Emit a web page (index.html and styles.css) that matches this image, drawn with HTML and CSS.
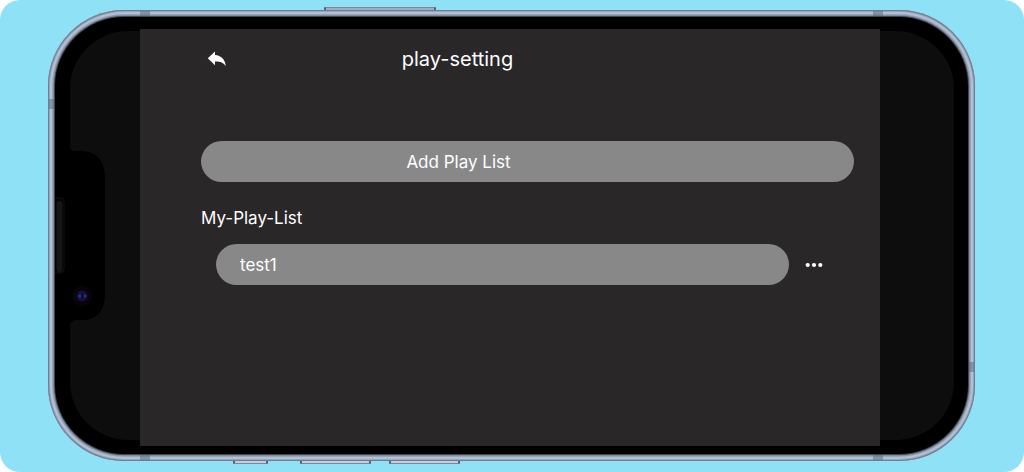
FILE: index.html
```html
<!DOCTYPE html>
<html lang="en">
<head>
<meta charset="utf-8">
<meta name="viewport" content="width=device-width, initial-scale=1">
<title>play-setting</title>
<link rel="stylesheet" href="styles.css">
</head>
<body>
<div class="stage">
  <div class="phone">
    <span class="key key-power"></span>
    <span class="key key-mute"></span>
    <span class="key key-up"></span>
    <span class="key key-down"></span>
    <div class="frame">
      <span class="band band-top-left"></span>
      <span class="band band-top-right"></span>
      <span class="band band-bottom-left"></span>
      <span class="band band-bottom-right"></span>
      <span class="band band-left"></span>
      <span class="band band-right"></span>
      <div class="bezel">
        <div class="side side-left"></div>
        <main class="app">
          <header class="header">
            <button class="icon-button back" type="button" aria-label="Back">
              <svg width="20" height="18" viewBox="0 0 20 18" aria-hidden="true"><path fill="#fff" d="M.8 8.300 8 1.500V5C14 5.400 18.200 9.500 18.900 16.300 16.300 12.500 13 11.300 8 11.500V15.300Z"/></svg>
            </button>
            <h1 class="title">play-setting</h1>
          </header>
          <button class="pill add" type="button">Add Play List</button>
          <h2 class="label">My-Play-List</h2>
          <ul class="lists">
            <li class="row">
              <button class="pill item" type="button">test1</button>
              <button class="icon-button more" type="button" aria-label="More options for test1">
                <svg width="18" height="6" viewBox="0 0 18 6" aria-hidden="true"><g fill="#fff"><circle cx="2.700" cy="3" r="2.100"/><circle cx="9" cy="3" r="2.100"/><circle cx="15.300" cy="3" r="2.100"/></g></svg>
              </button>
            </li>
          </ul>
        </main>
        <div class="side side-right"></div>
        <svg class="notch" width="52" height="188" viewBox="0 0 52 188" aria-hidden="true">
          <path fill="#000" d="M0 0H15V4Q15 9 20 9H27C42 10 50 19 50 36V152C50 169 42 178 27 178H20Q15 179 15 184V188H0Z"/>
          <rect x="-4" y="56" width="13" height="75" rx="4" fill="#020202" stroke="#121212"/>
          <rect x="2" y="59" width="5" height="71" rx="2.500" fill="#151515" stroke="#1f1f1f" stroke-width=".6"/>
          <circle cx="27" cy="154" r="10" fill="#08040a"/>
          <circle cx="27" cy="154" r="5" fill="#10133c" stroke="#171333"/>
          <circle cx="25" cy="154" r="1.500" fill="#2b36a0"/>
          <circle cx="30" cy="154" r="1.500" fill="#292f91"/>
          <circle cx="27" cy="154" r="1" fill="#03030c"/>
        </svg>
      </div>
    </div>
  </div>
</div>
</body>
</html>
```
FILE: styles.css
```css
* {
  box-sizing: border-box;
}

body {
  margin: 0;
  background: #fff;
  color: #fff;
  font-family: Inter, "Liberation Sans", sans-serif;
}

.stage {
  display: flex;
  min-height: 100vh;
  padding: 10px 49px 11px 48px;
  border-radius: 20px;
  background: #8fe2f6;
}

.phone {
  position: relative;
  display: flex;
  flex: 1;
}

/* metal rim */
.frame {
  position: relative;
  display: flex;
  flex: 1;
  padding: 7px;
  border-radius: 76px;
  background: #8592a6;
  box-shadow:
    inset 0 0 0 1px #6f7f93,
    inset 0 0 0 2px #97a4b8,
    inset 0 0 0 4px #b3c0d4,
    inset 0 0 0 5px #98a5b9,
    inset 0 0 0 6px #7f8da2;
}

.bezel {
  position: relative;
  display: flex;
  flex: 1;
  padding: 12px 14px 8px 15px;
  border-radius: 69px;
  background: #000;
  box-shadow: 0 0 0 1px #41474f;
}

.side {
  margin: 2px 0 6px;
  background: #0d0d0d;
}

.side-left {
  width: 70px;
  border-radius: 58px 0 0 58px;
}

.side-right {
  width: 74px;
  border-radius: 0 58px 58px 0;
}

.notch {
  position: absolute;
  left: 0;
  top: 50%;
  margin-top: -94px;
}

.band {
  position: absolute;
  width: 10px;
  height: 6px;
  background: rgb(83 101 123 / 50%);
}

.band-top-left {
  top: 1px;
  left: 92px;
}

.band-top-right {
  top: 1px;
  right: 92px;
}

.band-bottom-left {
  bottom: 1px;
  left: 92px;
}

.band-bottom-right {
  bottom: 1px;
  right: 92px;
}

.band-left,
.band-right {
  width: 6px;
  height: 10px;
}

.band-left {
  top: 89px;
  left: 1px;
}

.band-right {
  right: 1px;
  bottom: 89px;
}

/* hardware keys along the long edges */
.key {
  position: absolute;
  height: 4px;
  border: 1px solid #7d8799;
  border-right: 2px solid #586270;
  border-left: 2px solid #586270;
  border-radius: 1px;
  background: #c3cddf;
}

.key-power {
  top: -3px;
  left: 276px;
  width: 112px;
  background: #a3adc0;
}

.key-mute,
.key-up,
.key-down {
  bottom: -3px;
}

.key-mute {
  left: 185px;
  width: 35px;
}

.key-up {
  left: 252px;
  width: 71px;
}

.key-down {
  left: 341px;
  width: 71px;
}

.app {
  flex: 1;
  min-width: 0;
  padding: 14px 26px 24px 61px;
  background: #292728;
}

.header {
  display: flex;
  align-items: center;
  height: 32px;
  padding-right: 140px;
}

.title {
  flex: 1;
  margin: 0 32px 0 0;
  font-size: 20px;
  font-weight: 400;
  line-height: 32px;
  text-align: center;
}

.icon-button {
  display: flex;
  align-items: center;
  justify-content: center;
  width: 32px;
  height: 32px;
  padding: 0;
  border: 0;
  background: none;
  cursor: pointer;
}

.pill {
  height: 41px;
  border: 0;
  border-radius: 21px;
  background: #888;
  color: #fff;
  font: 400 17px/24px Inter, "Liberation Sans", sans-serif;
  cursor: pointer;
}

.add {
  display: block;
  width: 100%;
  margin-top: 66px;
  padding: 0 138px 0 0;
  text-align: center;
}

.label {
  margin: 24px 0 14px;
  font-size: 17px;
  font-weight: 400;
  line-height: 24px;
}

.lists {
  margin: 0;
  padding: 0 24px 0 15px;
  list-style: none;
}

.row {
  display: flex;
  align-items: center;
  gap: 9px;
}

.item {
  flex: 1;
  padding: 0 24px;
  text-align: left;
}
```
